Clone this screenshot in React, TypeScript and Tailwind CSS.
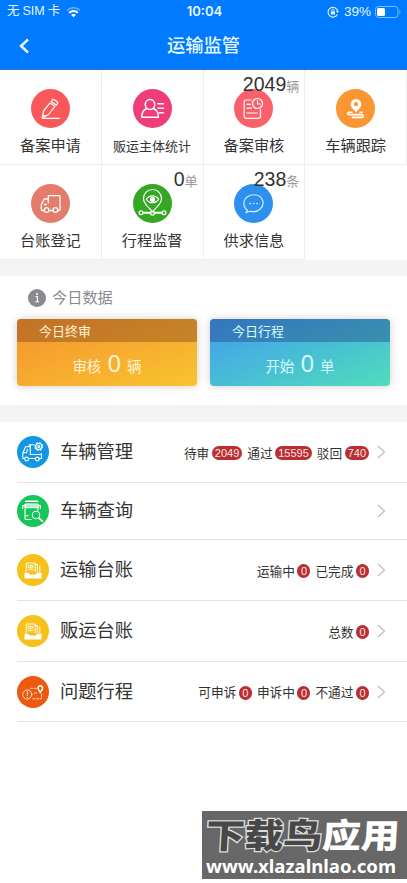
import { ReactNode } from "react";

const line = {
  fill: "none",
  stroke: "#fff",
  strokeWidth: 1.2,
  strokeLinecap: "round" as const,
  strokeLinejoin: "round" as const,
};

const menu: {
  label: string;
  color: string;
  small?: boolean;
  count?: string;
  unit?: string;
  icon: ReactNode;
}[] = [
  {
    label: "备案申请",
    color: "bg-[#f9585a]",
    icon: (
      <g {...line}>
        <path d="M12.500 22 19 14l5 3.200-6.300 8.300-6.500 3.300z" />
        <path d="m20.300 12.700 1.200-1.900a1 1 0 0 1 1.400-.2l3.500 2.400a1 1 0 0 1 .2 1.400l-1.200 1.700z" />
        <path d="M12.300 26.200l2.200 1.400M11.500 29.300h16.800" />
      </g>
    ),
  },
  {
    label: "贩运主体统计",
    color: "bg-[#ef3d7b]",
    small: true,
    icon: (
      <g {...line} strokeWidth={1.500}>
        <ellipse cx="17" cy="15.500" rx="4.700" ry="5" />
        <path d="M13.800 19.500c-3.500 1.500-5.200 4.500-5 8.700h16.600c.2-4.200-1.600-7.200-5.100-8.700M25 14.800h5.500M25 19.300h5.500M26.500 23.800h4" />
      </g>
    ),
  },
  {
    label: "备案审核",
    color: "bg-[#f9606a]",
    count: "2049",
    unit: "辆",
    icon: (
      <g {...line}>
        <path d="M17.500 11H12a1.800 1.800 0 0 0-1.800 1.800v14.700a1.800 1.800 0 0 0 1.800 1.800h12.700a1.800 1.800 0 0 0 1.800-1.800V20.500" />
        <circle cx="23.500" cy="14.500" r="5" />
        <path d="M23.500 11.800v3.200h2.500M13 15.300h3.500M13 19.200h4.500M13 24h10.500" />
      </g>
    ),
  },
  {
    label: "车辆跟踪",
    color: "bg-[#fb9634]",
    icon: (
      <g>
        <path
          d="M20 10a5.300 5.300 0 0 0-5.300 5.300c0 3.800 3.800 5.500 5.300 8.200 1.500-2.700 5.300-4.400 5.300-8.200A5.300 5.300 0 0 0 20 10z"
          fill="#fff"
        />
        <circle cx="20" cy="15.200" r="2.100" fill="#fb9634" />
        <path
          d="M16 23.200h-3a1.200 1.200 0 0 0 0 2.400h12.800a1.400 1.400 0 0 1 0 2.800H16.500M24 23.200h2.300"
          {...line}
          strokeWidth={1.600}
        />
      </g>
    ),
  },
  {
    label: "台账登记",
    color: "bg-[#e47c6c]",
    icon: (
      <g {...line} strokeWidth={1.300}>
        <path d="M13 26.500h-1.500a1.200 1.200 0 0 1-1.200-1.200v-4.800l3-5.500h4v-3.300h10.500a1.200 1.200 0 0 1 1.200 1.200v12.400a1.200 1.200 0 0 1-1.200 1.200h-.8M18.200 26.500h3.600M17.300 15v3.800M13.300 20.500h2" />
        <circle cx="15.600" cy="26" r="2.300" />
        <circle cx="24.400" cy="26" r="2.300" />
      </g>
    ),
  },
  {
    label: "行程监督",
    color: "bg-[#35a722]",
    count: "0",
    unit: "单",
    icon: (
      <g {...line}>
        <path d="M19.500 28c-2.500-4.500-9-7-9-13.500a9 9 0 0 1 18 0c0 6.500-6.500 9-9 13.500z" />
        <path d="M13.300 15.300c3.300-4.600 9.100-4.600 12.400 0-3.300 4.600-9.100 4.600-12.400 0z" />
        <circle cx="19.500" cy="15.300" r="2" fill="#fff" />
        <path d="M10 28.800h7.500M21.500 28.800H29" strokeWidth={1.900} />
        <circle cx="8" cy="28.800" r="1.900" />
        <circle cx="31" cy="28.800" r="1.900" />
        <circle cx="19.500" cy="29.300" r="1.900" />
      </g>
    ),
  },
  {
    label: "供求信息",
    color: "bg-[#2f8fef]",
    count: "238",
    unit: "条",
    icon: (
      <g {...line} stroke="#c8f1ff">
        <path d="M13.500 26.300c-5.500-4.300-4.300-11 .3-13.800 4.800-3 12.500-2.200 14.700 3.500 2.500 7-4.500 13.300-12.500 11.300l-4.200 1.400z" />
        <path d="M16 19.500h.1M19.500 19.500h.1M23 19.500h.1" strokeWidth={1.700} />
      </g>
    ),
  },
];

const ledgerIcon = (
  <g>
    <path d="M7.500 18.800h3.800l1.300 1.600h6.300l1.300-1.600h4.300v5.700h-17z" fill="#fff" />
    <g {...line} strokeWidth={0.900}>
      <path d="M9.200 17.800V9h9v8.800M20.300 10.500v7.300M22.800 12v5.800" />
      <path d="M11.500 15.700h4.500M11.500 11.300h4.500v2.500h-4.500zM13.700 11.300v2.500M18.200 10.500h2.100" />
    </g>
  </g>
);

const rows: {
  label: string;
  color: string;
  height: string;
  icon: ReactNode;
  stats: [string, string][];
}[] = [
  {
    label: "车辆管理",
    color: "bg-[#1296e6]",
    height: "h-[61px]",
    stats: [
      ["待审", "2049"],
      ["通过", "15595"],
      ["驳回", "740"],
    ],
    icon: (
      <g {...line} strokeWidth={1.100}>
        <path d="M7 22.500H5.800v-5.200l2.700-6.500h3.800v-2h4.200M12.200 22.500h6M22.200 22.500h2.300v-5.300M13.300 9v9.500H24M7 16.800h2.500l1-3.500" />
        <circle cx="9.600" cy="23" r="1.900" />
        <circle cx="20.300" cy="23" r="1.900" />
        <circle cx="21.700" cy="10.500" r="3.800" strokeWidth={1.300} strokeDasharray="1.700 1.280" strokeLinecap="butt" />
        <circle cx="21.700" cy="10.500" r="3" />
        <circle cx="21.700" cy="10.500" r="1" />
      </g>
    ),
  },
  {
    label: "车辆查询",
    color: "bg-[#16c65a]",
    height: "h-[57px]",
    stats: [],
    icon: (
      <g {...line} strokeWidth={1.100}>
        <path d="M8.500 6.300h12.300" strokeWidth={1.400} />
        <rect x="7.800" y="9" width="13.600" height="3.800" rx="1" fill="#fff" fillOpacity=".7" />
        <path d="M7.600 10.500H5.800v3M21.500 10.500h1.800v3M8 13.500v10a1 1 0 0 0 1 1h5M21 13.500v1.800M8.500 20.800h2.500" />
        <circle cx="19" cy="20" r="3.700" />
        <path d="m21.800 22.900 3.500 3.200" strokeWidth={1.600} />
      </g>
    ),
  },
  {
    label: "运输台账",
    color: "bg-[#f5c11a]",
    height: "h-[61px]",
    stats: [
      ["运输中", "0"],
      ["已完成", "0"],
    ],
    icon: ledgerIcon,
  },
  {
    label: "贩运台账",
    color: "bg-[#f5c11a]",
    height: "h-[61px]",
    stats: [["总数", "0"]],
    icon: ledgerIcon,
  },
  {
    label: "问题行程",
    color: "bg-[#ed590e]",
    height: "h-[60px]",
    stats: [
      ["可申诉", "0"],
      ["申诉中", "0"],
      ["不通过", "0"],
    ],
    icon: (
      <g {...line} strokeWidth={0.800}>
        <circle cx="10.300" cy="18.500" r="4.600" />
        <path d="M10.300 15.500v4M10.300 21.300v.3" />
        <path d="M13.500 12.300h6M15.800 22.800h8.700v-5M17.500 17h3.500" strokeDasharray="2.200 1.500" />
        <path
          d="M23.300 9.800a2.300 2.300 0 0 0-2.300 2.400c0 1.800 1.800 2.500 2.300 4.500.5-2 2.300-2.700 2.300-4.500a2.300 2.300 0 0 0-2.300-2.400z"
          strokeWidth={1.400}
        />
      </g>
    ),
  },
];

const cards = [
  {
    title: "今日终审",
    before: "审核",
    after: "辆",
    text: "text-[#fff3d6]",
    color: "bg-linear-to-br from-[#f4912f] to-[#f8c42f]",
    bar: "bg-[#8a4c1c]/45",
  },
  {
    title: "今日行程",
    before: "开始",
    after: "单",
    text: "text-[#d6fbff]",
    color: "bg-linear-to-br from-[#459aee] to-[#52dcb9]",
    bar: "bg-[#1d3f7a]/40",
  },
];

export default function App() {
  return (
    <div className="relative h-[883px] w-[407px] overflow-hidden bg-white font-['Inter','Noto_Sans_CJK_SC',sans-serif] text-[#333]">
      {/* Header */}
      <header className="h-[70px] border-b border-[#2f6fd0] bg-[#007aff] text-[#e6f8ff]">
        <div className="grid h-[23px] grid-cols-3 items-center pr-[5px] pl-[7px] text-[13px]">
          <div className="flex items-center">
            <div className="flex gap-[3px] font-['Liberation_Sans','Noto_Sans_CJK_SC',sans-serif] text-[12.500px] whitespace-nowrap">
              <span>无</span>
              <span>SIM</span>
              <span>卡</span>
            </div>
            <svg className="mt-px ml-[6px]" width="15" height="12" viewBox="0 0 15 12">
              <path d="M1 4.500a9.200 9.200 0 0 1 13 0" fill="none" stroke="#6db6ff" strokeWidth="1.600" />
              <path d="M3.100 6.900a6.200 6.200 0 0 1 8.800 0" fill="none" stroke="#fff" strokeWidth="1.900" />
              <path d="M7.500 11.300 5.100 8.900a3.400 3.400 0 0 1 4.800 0z" fill="#fff" />
            </svg>
          </div>
          <span className="text-center font-semibold">10:04</span>
          <div className="flex items-center justify-end">
            <svg width="12" height="12" viewBox="0 0 12 12">
              <path d="M10.700 5A4.900 4.900 0 1 0 10.300 8.400" fill="none" stroke="#e6f8ff" strokeWidth="1.100" />
              <path d="M9 5h3l-1.400 2z" fill="#e6f8ff" />
              <rect x="3.800" y="5.300" width="4.200" height="3.200" rx=".5" fill="#e6f8ff" />
              <path d="M4.700 5.300V4.400a1.200 1.200 0 0 1 2.400 0v.9" fill="none" stroke="#e6f8ff" strokeWidth=".8" />
            </svg>
            <span className="mt-[2px] ml-[5px] font-['Liberation_Sans',sans-serif] text-[13.500px]">
              39%
            </span>
            <svg className="ml-[4px]" width="27" height="12" viewBox="0 0 27 12">
              <rect x=".5" y=".5" width="22.500" height="11" rx="3" fill="none" stroke="#7dbdff" />
              <rect x="2" y="2" width="8" height="8" rx="1.500" fill="#fff" />
              <path d="M24.500 4v4c1.300-.5 1.300-3.500 0-4z" fill="#7dbdff" />
            </svg>
          </div>
        </div>
        <div className="flex h-[46px] items-center pl-[19px]">
          <svg width="11" height="16" viewBox="0 0 11 16">
            <path d="M9 1.500 2 8l7 6.500" fill="none" stroke="#e6f8ff" strokeWidth="2.500" />
          </svg>
          <h1 className="flex-1 pr-[30px] text-center text-[18.300px] font-medium">运输监管</h1>
        </div>
      </header>

      {/* Menu */}
      <nav className="grid grid-cols-4">
        {menu.map((item) => (
          <div
            key={item.label}
            className="relative flex h-[95px] flex-col items-center border-r border-b border-[#eee] pt-[19px]"
          >
            <div className={`size-[39px] rounded-full ${item.color}`}>
              <svg width="39" height="39" viewBox="0 0 39 39">
                {item.icon}
              </svg>
            </div>
            <span
              className={`mt-[7px] leading-[22px] ${item.small ? "text-[13px]" : "text-[15.200px]"}`}
            >
              {item.label}
            </span>
            {item.count && (
              <div className="absolute top-[3px] right-[5px] flex items-baseline leading-[22px]">
                <span className="font-['Liberation_Sans',sans-serif] text-[19.500px]">
                  {item.count}
                </span>
                <span className="text-[13px] text-[#999]">{item.unit}</span>
              </div>
            )}
          </div>
        ))}
      </nav>

      <div className="h-[16px] bg-[#f4f4f4]" />

      {/* Today */}
      <section className="h-[129px] px-[17px] pt-[10px]">
        <div className="flex h-[24px] items-center pl-[11px] text-[#8a8a8f]">
          <svg width="18" height="18" viewBox="0 0 18 18">
            <circle cx="9" cy="9" r="9" fill="#8a8a8f" />
            <path d="M7.500 7.500h1.900v5M7.300 12.700h3.800" fill="none" stroke="#fff" strokeWidth="1.100" />
            <circle cx="9" cy="5" r="1" fill="#fff" />
          </svg>
          <span className="ml-[6px] text-[15.200px]">今日数据</span>
        </div>
        <div className="mt-[9px] grid grid-cols-[180px_180px] gap-[13px]">
          {cards.map((card) => (
            <div
              key={card.title}
              className={`h-[67px] overflow-hidden rounded-[4px] shadow-[0_0_8px_rgba(0,0,0,0.2)] ${card.color} ${card.text}`}
            >
              <div className={`h-[23px] pl-[22px] text-[13px] leading-[24px] ${card.bar}`}>
                {card.title}
              </div>
              <div className="flex h-[44px] items-baseline justify-center gap-[6px] text-[14.500px] leading-[42px]">
                <span>{card.before}</span>
                <span className="font-['Noto_Sans',sans-serif] text-[24px]">0</span>
                <span>{card.after}</span>
              </div>
            </div>
          ))}
        </div>
      </section>

      <div className="h-[17px] bg-[#f4f4f4]" />

      {/* List */}
      <ul>
        {rows.map((row) => (
          <li
            key={row.label}
            className={`ml-[17px] flex items-center border-b border-[#e2e2e2] pr-[21px] ${row.height}`}
          >
            <div className={`size-[32px] shrink-0 rounded-full ${row.color}`}>
              <svg width="32" height="32" viewBox="0 0 32 32">
                {row.icon}
              </svg>
            </div>
            <span className="ml-[11px] text-[18.300px]">{row.label}</span>
            <div className="mt-[3px] ml-auto flex items-center gap-[5px]">
              {row.stats.map(([name, value]) => (
                <div key={name} className="flex items-center gap-[2.500px] text-[12.700px]">
                  <span>{name}</span>
                  <span className="h-[14px] min-w-[13px] rounded-full bg-[#b92f33] px-[3px] text-center font-['Liberation_Sans',sans-serif] text-[11px] leading-[14px] text-[#ffe5e5]">
                    {value}
                  </span>
                </div>
              ))}
            </div>
            <svg className="ml-[8px]" width="9" height="14" viewBox="0 0 9 14">
              <path d="m1 1 6.500 6L1 13" fill="none" stroke="#bbb" strokeWidth="1.100" />
            </svg>
          </li>
        ))}
      </ul>

      {/* Watermark */}
      <div className="absolute top-[811px] left-[202px] flex h-[68px] w-[205px] flex-col items-start bg-[#676767] pl-[4px] font-black text-white">
        <div className="flex h-[46px] origin-left scale-x-[1.140] -skew-x-3 items-center font-['Noto_Sans_CJK_SC',sans-serif] text-[34px] leading-[46px] whitespace-nowrap">
          <span className="text-[#484848] [-webkit-text-stroke:2.500px_#ddd] [paint-order:stroke_fill]">
            下载鸟
          </span>
          <span>应用</span>
        </div>
        <div className="h-[19px] origin-left scale-x-[1.060] font-['Noto_Sans',sans-serif] text-[17.500px] leading-[19px] font-bold">
          www.xlazalnlao.com
        </div>
      </div>
    </div>
  );
}
